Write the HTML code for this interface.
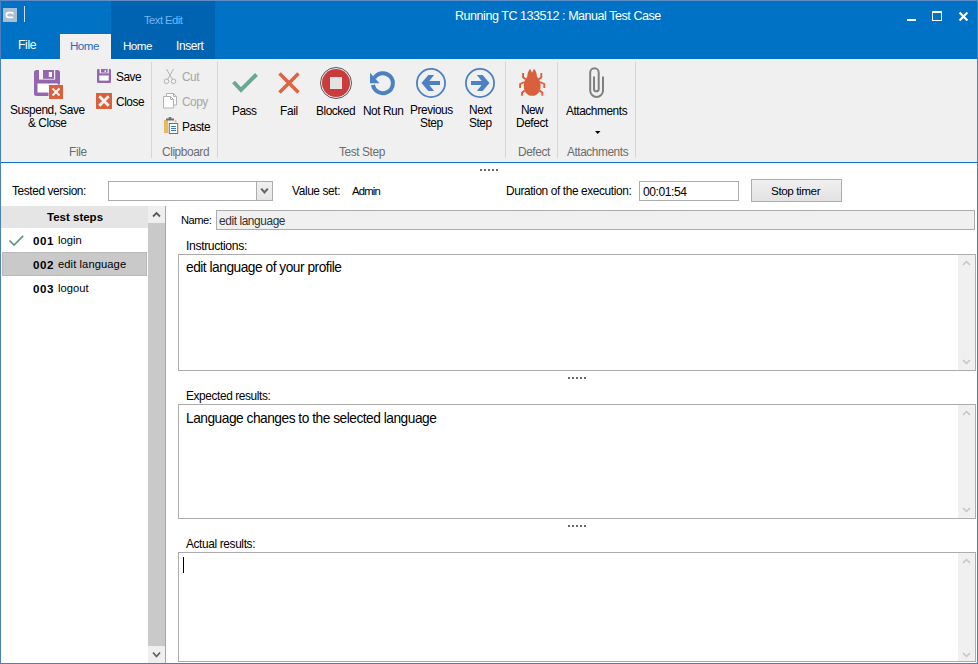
<!DOCTYPE html>
<html><head><meta charset="utf-8">
<style>
*{box-sizing:border-box;margin:0;padding:0}
html,body{width:978px;height:664px;overflow:hidden;background:#fff}
body{position:relative;font-family:"Liberation Sans",sans-serif;font-size:11px;color:#000}
.a{position:absolute}
.t{position:absolute;white-space:nowrap;line-height:1}
</style></head><body>
<!-- title bar -->
<div class="a" style="left:0;top:0;width:978px;height:59px;background:#0072c6"></div>
<div class="a" style="left:111px;top:1px;width:104px;height:58px;background:#0063b1"></div>
<!-- app icon -->
<div class="a" style="left:3px;top:8px;width:14px;height:14px;background:#aabed2"></div>
<div class="a" style="left:24px;top:6px;width:1px;height:16px;background:#d7dde5"></div>
<div class="t" style="left:144px;top:15.4px;font-size:11.2px;color:#72b8f5;letter-spacing:-0.5px">Text Edit</div>
<div class="t" style="left:455px;top:10.21px;font-size:12.53px;color:#fff;letter-spacing:-0.455px">Running TC 133512 : Manual Test Case</div>
<!-- tabs -->
<div class="t" style="left:18px;top:39.24px;font-size:12.2px;color:#fff;letter-spacing:-0.359px">File</div>
<div class="a" style="left:60px;top:34px;width:51px;height:25px;background:#f0f0f0"></div>
<div class="t" style="left:70px;top:40.27px;font-size:11.66px;color:#2b6cc0;letter-spacing:-0.57px">Home</div>
<div class="t" style="left:123px;top:40.27px;font-size:11.66px;color:#fff;letter-spacing:-0.57px">Home</div>
<div class="t" style="left:176px;top:41.26px;font-size:11.88px;color:#fff;letter-spacing:-0.365px">Insert</div>
<!-- ribbon -->
<div class="a" style="left:0;top:59px;width:978px;height:103px;background:#f0f0f0"></div>
<div class="a" style="left:0;top:162px;width:978px;height:1px;background:#0a72c6"></div>

<!-- ribbon separators -->
<div class="a" style="left:151px;top:62px;width:1px;height:96px;background:#d6d6d6"></div>
<div class="a" style="left:217px;top:62px;width:1px;height:96px;background:#d6d6d6"></div>
<div class="a" style="left:505px;top:62px;width:1px;height:96px;background:#d6d6d6"></div>
<div class="a" style="left:557px;top:62px;width:1px;height:96px;background:#d6d6d6"></div>
<div class="a" style="left:635px;top:62px;width:1px;height:96px;background:#d6d6d6"></div>
<!-- ribbon labels -->
<div class="t" style="left:10px;top:105.26px;font-size:11.88px;letter-spacing:-0.456px">Suspend, Save</div>
<div class="t" style="left:28px;top:118.26px;font-size:11.88px;letter-spacing:-0.438px">&amp; Close</div>
<div class="t" style="left:69px;top:147.26px;font-size:11.88px;color:#6d6d6d;letter-spacing:-0.352px">File</div>
<div class="t" style="left:116px;top:72.26px;font-size:11.88px;letter-spacing:-0.5px">Save</div>
<div class="t" style="left:116px;top:97.26px;font-size:11.88px;letter-spacing:-0.45px">Close</div>
<div class="t" style="left:182px;top:72.26px;font-size:11.88px;color:#a6a6a6;letter-spacing:-0.453px">Cut</div>
<div class="t" style="left:182px;top:97.26px;font-size:11.88px;color:#a6a6a6;letter-spacing:-0.512px">Copy</div>
<div class="t" style="left:182px;top:122.26px;font-size:11.88px;letter-spacing:-0.447px">Paste</div>
<div class="t" style="left:162px;top:147.26px;font-size:11.88px;color:#6d6d6d;letter-spacing:-0.417px">Clipboard</div>
<div class="t" style="left:232px;top:106.26px;font-size:11.88px;letter-spacing:-0.484px">Pass</div>
<div class="t" style="left:280px;top:106.26px;font-size:11.88px;letter-spacing:-0.352px">Fail</div>
<div class="t" style="left:316px;top:106.26px;font-size:11.88px;letter-spacing:-0.444px">Blocked</div>
<div class="t" style="left:363px;top:106.26px;font-size:11.88px;letter-spacing:-0.46px">Not Run</div>
<div class="t" style="left:410px;top:105.26px;font-size:11.88px;letter-spacing:-0.426px">Previous</div>
<div class="t" style="left:420px;top:118.26px;font-size:11.88px;letter-spacing:-0.449px">Step</div>
<div class="t" style="left:469px;top:105.26px;font-size:11.88px;letter-spacing:-0.449px">Next</div>
<div class="t" style="left:469px;top:118.26px;font-size:11.88px;letter-spacing:-0.449px">Step</div>
<div class="t" style="left:339px;top:147.26px;font-size:11.88px;color:#6d6d6d;letter-spacing:-0.406px">Test Step</div>
<div class="t" style="left:521px;top:105.26px;font-size:11.88px;letter-spacing:-0.583px">New</div>
<div class="t" style="left:516px;top:118.26px;font-size:11.88px;letter-spacing:-0.422px">Defect</div>
<div class="t" style="left:518px;top:147.26px;font-size:11.88px;color:#6d6d6d;letter-spacing:-0.422px">Defect</div>
<div class="t" style="left:566px;top:106.26px;font-size:11.88px;letter-spacing:-0.443px">Attachments</div>
<div class="t" style="left:567px;top:147.26px;font-size:11.88px;color:#6d6d6d;letter-spacing:-0.443px">Attachments</div>
<svg class="a" style="left:0;top:0" width="978" height="664" viewBox="0 0 978 664">
 <!-- app icon glyph -->
 <path d="M13.1,14.2 A1.6,1.6 0 0 0 11.5,12.6 H8.8 A2.4,2.4 0 0 0 8.8,17.4 H13.2" fill="none" stroke="#fff" stroke-width="1.6"/>
 <!-- suspend floppy -->
 <rect x="34" y="70" width="26" height="26" rx="2.5" fill="#9466b0"/>
 <rect x="39" y="70" width="16.2" height="9.6" fill="#f6f6f6"/>
 <rect x="43" y="70" width="11" height="8.8" fill="#9466b0"/>
 <rect x="48.8" y="72" width="3.2" height="5" fill="#f6f6f6"/>
 <rect x="37.5" y="83.5" width="20" height="9" fill="#fff"/>
 <rect x="48.5" y="84.5" width="15" height="15" fill="#f0f0f0"/>
 <rect x="49" y="85" width="14" height="14" fill="#d9603b"/>
 <path d="M52.5,88.5 L59.5,95.5 M59.5,88.5 L52.5,95.5" stroke="#f3f3f3" stroke-width="2"/>
 <!-- save small -->
 <rect x="97" y="69" width="14" height="14" rx="1.2" fill="#9466b0"/>
 <rect x="99.6" y="69" width="9.2" height="4.3" fill="#f6f6f6"/>
 <rect x="101" y="69" width="6.6" height="3.6" fill="#9466b0"/>
 <rect x="104.6" y="70.2" width="1.4" height="1.8" fill="#f6f6f6"/>
 <rect x="99.3" y="75.5" width="9.4" height="5.1" fill="#fff"/>
 <!-- close small -->
 <rect x="96" y="93" width="16" height="16" fill="#d9603b"/>
 <path d="M99.3,96.3 L108.7,105.7 M108.7,96.3 L99.3,105.7" stroke="#f3f3f3" stroke-width="2.8"/>
 <!-- cut -->
 <g fill="none" stroke="#b3b3b3" stroke-width="1">
  <path d="M166.5,69 L172.5,79.5 M173.5,69 L167.5,79.5"/>
  <circle cx="166.5" cy="81.3" r="2.3"/><circle cx="173.5" cy="81.3" r="2.3"/>
 </g>
 <!-- copy -->
 <g fill="#fff" stroke="#b3b3b3" stroke-width="1">
  <path d="M166.5,93.5 H173.5 L176.5,96.5 V105 H166.5 Z"/>
  <path d="M163.5,96.5 H170.5 L173.5,99.5 V108 H163.5 Z"/>
  <path d="M173.5,93.5 V96.5 H176.5 M170.5,96.5 V99.5 H173.5" fill="none"/>
 </g>
 <!-- paste -->
 <rect x="164" y="120" width="4" height="13" fill="#ecb95a"/>
 <rect x="174.8" y="120" width="1.7" height="2.2" fill="#ecb95a"/>
 <rect x="166" y="118.5" width="8" height="2" fill="#6f6f6f"/>
 <rect x="168.5" y="117" width="3" height="2" rx="1" fill="#6f6f6f"/>
 <rect x="169.3" y="123.5" width="8.4" height="10" fill="#fff" stroke="#6f6f6f" stroke-width="1"/>
 <path d="M171,126.5 H176 M171,128.5 H176 M171,130.5 H176" stroke="#3a78c0" stroke-width="1"/>
 <!-- pass -->
 <path d="M233.5,82 L241,90 L256.5,74.5" fill="none" stroke="#6aa795" stroke-width="4"/>
 <!-- fail -->
 <path d="M279.5,73.5 L298.5,92.5 M298.5,73.5 L279.5,92.5" fill="none" stroke="#df6341" stroke-width="3.5"/>
 <!-- blocked -->
 <circle cx="336" cy="83" r="15.5" fill="#f0f0f0" stroke="#555" stroke-width="1"/>
 <circle cx="336" cy="83" r="14" fill="#cc3b3b"/>
 <rect x="330" y="77" width="12" height="12" fill="#e3e3e3"/>
 <!-- not run -->
 <path d="M373,84.8 A10,10 0 1 0 374.3,78" fill="none" stroke="#4c81c2" stroke-width="4"/>
 <path d="M370,72.8 L370,83.2 L379.5,83.2 Z" fill="#4c81c2"/>
 <!-- previous -->
 <circle cx="431" cy="83" r="14.1" fill="none" stroke="#4c81c2" stroke-width="1.8"/>
 <path d="M421.5,83 L428.4,75 H434.1 L427.8,83 L434.1,91 H428.4 Z" fill="#4c81c2"/>
 <rect x="426" y="81" width="14" height="4" fill="#4c81c2"/>
 <!-- next -->
 <circle cx="480" cy="83" r="14.1" fill="none" stroke="#4c81c2" stroke-width="1.8"/>
 <path d="M489.5,83 L482.6,75 H476.9 L483.2,83 L476.9,91 H482.6 Z" fill="#4c81c2"/>
 <rect x="471" y="81" width="14" height="4" fill="#4c81c2"/>
 <!-- bug -->
 <g fill="#da5f3c">
  <path d="M523.8,86 C523.8,79 527.5,75.2 532.2,75.2 C536.9,75.2 540.6,79 540.6,86 C540.6,92.2 537,95.8 532.2,95.8 C527.4,95.8 523.8,92.2 523.8,86 Z"/>
  <path d="M527.3,78 C527.3,73 528.5,70.5 530.2,69 L532,72.8 L534,69 C535.8,70.5 537,73 537,78 Z"/>
 </g>
 <g fill="none" stroke="#da5f3c" stroke-width="1.9">
  <path d="M523.1,73 V77.3 L525.6,79.3"/><path d="M541.3,73 V77.3 L538.8,79.3"/>
  <path d="M524.5,82 L520.1,84 V88"/><path d="M539.9,82 L544.3,84 V88"/>
  <path d="M524.8,90.5 L522,92.8 V95.8"/><path d="M539.6,90.5 L542.4,92.8 V95.8"/>
 </g>
 <!-- paperclip -->
 <path d="M594,76.5 V89 A2.35,2.35 0 0 0 598.7,89 V72.5 A4.25,4.25 0 0 0 590.2,72.5 V90.5 A6.4,6.4 0 0 0 603,90.5 V76.5" fill="none" stroke="#808080" stroke-width="2"/>
 <path d="M595,131 H600.5 L597.75,134 Z" fill="#000"/>
</svg>

<!-- splitter dots top -->
<div class="a" style="left:480px;top:169px;width:18px;height:2px;background:repeating-linear-gradient(90deg,#6a6a6a 0 2px,transparent 2px 4px)"></div>
<!-- form row -->
<div class="t" style="left:12px;top:186.26px;font-size:11.88px;letter-spacing:-0.393px">Tested version:</div>
<div class="a" style="left:108px;top:181px;width:165px;height:20px;border:1px solid #acacac;background:#fff"></div>
<div class="a" style="left:256px;top:182px;width:16px;height:18px;background:linear-gradient(#f0f0f0,#e6e6e6);border-left:1px solid #acacac"></div>
<svg class="a" style="left:0;top:0" width="978" height="664" viewBox="0 0 978 664">
 <path d="M261.2,188.6 L264.5,192.4 L267.8,188.6" fill="none" stroke="#666" stroke-width="2.2"/>
</svg>
<div class="t" style="left:292px;top:186.26px;font-size:11.88px;letter-spacing:-0.383px">Value set:</div>
<div class="t" style="left:352px;top:185.8px;font-size:11.3px;letter-spacing:-0.8px">Admin</div>
<div class="t" style="left:506px;top:186.26px;font-size:11.88px;letter-spacing:-0.383px">Duration of the execution:</div>
<div class="a" style="left:639px;top:181px;width:100px;height:20px;border:1px solid #acacac;background:#fff"></div>
<div class="t" style="left:643px;top:186.24px;font-size:12.1px;letter-spacing:-0.439px">00:01:54</div>
<div class="a" style="left:751px;top:179px;width:91px;height:23px;border:1px solid #adadad;background:linear-gradient(#f0f0f0,#e2e2e2)"></div>
<div class="t" style="left:771px;top:185.27px;font-size:11.66px;letter-spacing:-0.392px">Stop timer</div>
<!-- test steps list -->
<div class="a" style="left:1px;top:206px;width:147px;height:22px;background:#e5e5e5"></div>
<div class="t" style="left:47px;top:212px;font-size:11.5px;font-weight:bold">Test steps</div>
<div class="a" style="left:2px;top:252px;width:145px;height:24px;background:#c9c9c9;border:1px solid #b9b9b9"></div>
<svg class="a" style="left:0;top:0" width="978" height="664" viewBox="0 0 978 664">
 <path d="M9.5,240.5 L14,245 L23.2,235.8" fill="none" stroke="#5b968c" stroke-width="1.7"/>
</svg>
<div class="t" style="left:33px;top:235px;font-size:11.6px;font-weight:bold;letter-spacing:0.5px">001</div>
<div class="t" style="left:58px;top:234.6px;font-size:11.2px;letter-spacing:0.05px">login</div>
<div class="t" style="left:33px;top:259px;font-size:11.6px;font-weight:bold;letter-spacing:0.5px">002</div>
<div class="t" style="left:58px;top:258.6px;font-size:11.2px;letter-spacing:0.08px">edit language</div>
<div class="t" style="left:33px;top:283px;font-size:11.6px;font-weight:bold;letter-spacing:0.5px">003</div>
<div class="t" style="left:58px;top:282.6px;font-size:11.2px;letter-spacing:0.05px">logout</div>
<!-- list scrollbar -->
<div class="a" style="left:148px;top:206px;width:17px;height:457px;background:#c9c9c9"></div>
<div class="a" style="left:148px;top:206px;width:17px;height:17px;background:#efefef"></div>
<div class="a" style="left:148px;top:646px;width:17px;height:17px;background:#efefef"></div>
<div class="a" style="left:165px;top:206px;width:1px;height:457px;background:#a6a6a6"></div>
<svg class="a" style="left:0;top:0" width="978" height="664" viewBox="0 0 978 664">
 <path d="M153,216.5 L156.5,213 L160,216.5" fill="none" stroke="#5a5a5a" stroke-width="1.8"/>
 <path d="M153,652.5 L156.5,656.5 L160,652.5" fill="none" stroke="#606060" stroke-width="1.8"/>
</svg>
<!-- name -->
<div class="t" style="left:181px;top:215.31px;font-size:11.12px;letter-spacing:-0.481px">Name:</div>
<div class="a" style="left:216px;top:210px;width:759px;height:20px;border:1px solid #acacac;background:#f0f0f0"></div>
<div class="t" style="left:219px;top:216.26px;font-size:11.88px;color:#333;letter-spacing:-0.405px">edit language</div>
<!-- instructions -->
<div class="t" style="left:186px;top:240.24px;font-size:12.2px;letter-spacing:-0.37px">Instructions:</div>
<div class="a" style="left:178px;top:254px;width:798px;height:117px;border:1px solid #acacac;background:#fff"></div>
<div class="a" style="left:958px;top:255px;width:17px;height:115px;background:#f0f0f0"></div>
<div class="t" style="left:186px;top:261.04px;font-size:13.73px;letter-spacing:-0.479px">edit language of your profile</div>
<div class="a" style="left:568px;top:377px;width:18px;height:2px;background:repeating-linear-gradient(90deg,#6a6a6a 0 2px,transparent 2px 4px)"></div>
<!-- expected -->
<div class="t" style="left:186px;top:391.26px;font-size:11.88px;letter-spacing:-0.395px">Expected results:</div>
<div class="a" style="left:178px;top:404px;width:798px;height:115px;border:1px solid #acacac;background:#fff"></div>
<div class="a" style="left:958px;top:405px;width:17px;height:113px;background:#f0f0f0"></div>
<div class="t" style="left:186px;top:412.04px;font-size:13.73px;letter-spacing:-0.48px">Language changes to the selected language</div>
<div class="a" style="left:568px;top:525px;width:18px;height:2px;background:repeating-linear-gradient(90deg,#6a6a6a 0 2px,transparent 2px 4px)"></div>
<!-- actual -->
<div class="t" style="left:186px;top:539.26px;font-size:11.88px;letter-spacing:-0.367px">Actual results:</div>
<div class="a" style="left:178px;top:552px;width:798px;height:110px;border:1px solid #acacac;background:#fff"></div>
<div class="a" style="left:958px;top:553px;width:17px;height:108px;background:#f0f0f0"></div>
<div class="a" style="left:183px;top:557px;width:1px;height:16px;background:#000"></div>
<svg class="a" style="left:0;top:0" width="978" height="664" viewBox="0 0 978 664">
 <g fill="none" stroke="#c4c4c4" stroke-width="1.5">
  <path d="M963,265 L966.5,261.5 L970,265"/><path d="M963,360 L966.5,363.5 L970,360"/>
  <path d="M963,415 L966.5,411.5 L970,415"/><path d="M963,508 L966.5,511.5 L970,508"/>
  <path d="M963,563 L966.5,559.5 L970,563"/><path d="M963,653 L966.5,656.5 L970,653"/>
 </g>
</svg>
<!-- window border -->
<div class="a" style="left:0;top:0;width:978px;height:1px;background:#5f8ec6"></div>
<div class="a" style="left:0;top:0;width:1px;height:664px;background:#4a80c0"></div>
<div class="a" style="left:977px;top:0;width:1px;height:664px;background:#4a80c0"></div>
<div class="a" style="left:0;top:663px;width:978px;height:1px;background:#4a80c0"></div>
<!-- window controls -->
<svg class="a" style="left:0;top:0" width="978" height="664" viewBox="0 0 978 664">
 <rect x="907" y="19" width="9" height="2" fill="#fff"/>
 <rect x="932.5" y="11.5" width="9" height="9" fill="none" stroke="#fff" stroke-width="1"/>
 <rect x="932" y="11" width="10" height="2" fill="#fff"/>
 <path d="M959.6,12.6 L967.4,20.4 M967.4,12.6 L959.6,20.4" stroke="#fff" stroke-width="2.1"/>
</svg>
</body></html>
